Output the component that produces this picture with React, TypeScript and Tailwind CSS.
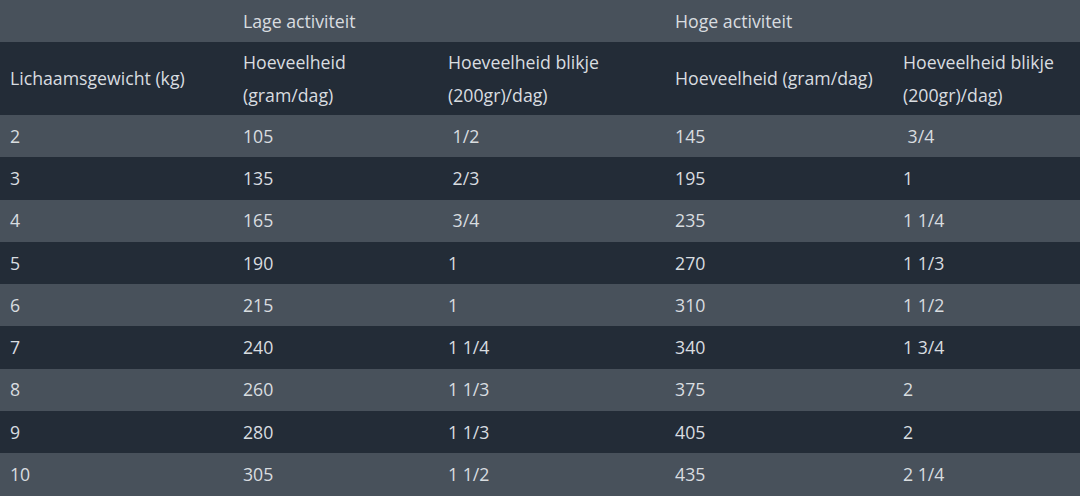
import React from "react";

const rows: [string, string, string, string, string][] = [
  ["2", "105", "\u00a01/2", "145", "\u00a03/4"],
  ["3", "135", "\u00a02/3", "195", "1"],
  ["4", "165", "\u00a03/4", "235", "1 1/4"],
  ["5", "190", "1", "270", "1 1/3"],
  ["6", "215", "1", "310", "1 1/2"],
  ["7", "240", "1 1/4", "340", "1 3/4"],
  ["8", "260", "1 1/3", "375", "2"],
  ["9", "280", "1 1/3", "405", "2"],
  ["10", "305", "1 1/2", "435", "2 1/4"],
];

export default function App() {
  return (
    <div
      className="w-[1080px] h-[496px] overflow-hidden bg-[#48515b] text-[#d9dde0] text-[17.7px]"
      style={{ fontFamily: '"Open Sans", "Noto Sans", sans-serif' }}
    >
      <table className="w-full table-fixed border-collapse">
        <colgroup>
          <col className="w-[233px]" />
          <col className="w-[205px]" />
          <col className="w-[227px]" />
          <col className="w-[228px]" />
          <col />
        </colgroup>
        <thead>
          <tr className="h-[42px] bg-[#48515b]">
            <th className="px-[10px] text-left font-normal"></th>
            <th className="px-[10px] text-left font-normal leading-[33px]" colSpan={2}>
              Lage activiteit
            </th>
            <th className="px-[10px] text-left font-normal leading-[33px]" colSpan={2}>
              Hoge activiteit
            </th>
          </tr>
          <tr className="h-[73px] bg-[#232c37]">
            <th className="px-[10px] text-left font-normal leading-[33px]">Lichaamsgewicht (kg)</th>
            <th className="px-[10px] text-left font-normal leading-[33px]">Hoeveelheid (gram/dag)</th>
            <th className="px-[10px] text-left font-normal leading-[33px]">Hoeveelheid blikje (200gr)/dag)</th>
            <th className="px-[10px] text-left font-normal leading-[33px]">Hoeveelheid (gram/dag)</th>
            <th className="px-[10px] text-left font-normal leading-[33px]">Hoeveelheid blikje (200gr)/dag)</th>
          </tr>
        </thead>
        <tbody>
          {rows.map((r, i) => (
            <tr key={i} className={i % 2 === 0 ? "h-[42.3px] bg-[#48515b]" : "h-[42.3px] bg-[#232c37]"}>
              {r.map((c, j) => (
                <td key={j} className="px-[10px] leading-[33px] whitespace-pre">
                  {c}
                </td>
              ))}
            </tr>
          ))}
        </tbody>
      </table>
    </div>
  );
}
